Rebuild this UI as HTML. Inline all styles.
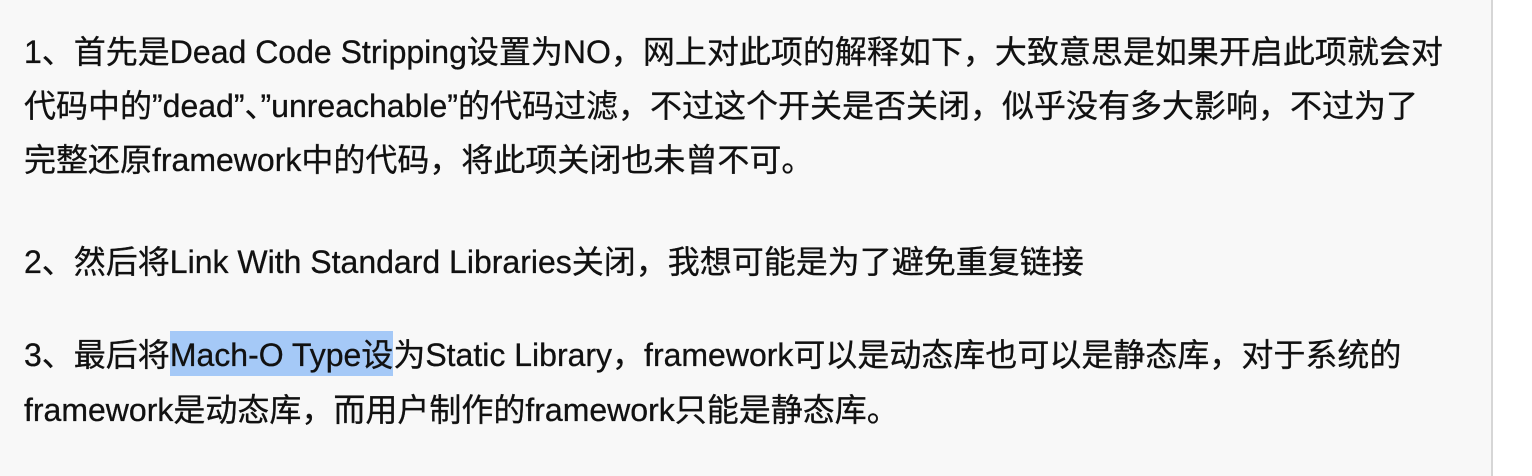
<!DOCTYPE html>
<html><head><meta charset="utf-8"><style>
html,body{margin:0;padding:0;width:1532px;height:476px;overflow:hidden;background:#fff;}
.bg{position:absolute;left:0;top:0;width:1491px;height:476px;background:#f8f8f8;border-right:2px solid #d6d6d6;}
.l{position:absolute;left:24px;white-space:nowrap;font-family:"Liberation Sans","Noto Sans CJK SC",sans-serif;font-size:32px;color:#111;line-height:46px;height:46px;-webkit-text-stroke:0.3px #111;}
.hl{background:#a5c9f7;padding:6px 0 3px 0;}
</style></head><body>
<div class="bg"></div>
<div class="l" style="top:29px">1、首先是Dead Code Stripping设置为NO，网上对此项的解释如下，大致意思是如果开启此项就会对</div>
<div class="l" style="top:83px">代码中的”dead”、”unreachable”的代码过滤，不过这个开关是否关闭，似乎没有多大影响，不过为了</div>
<div class="l" style="top:137px">完整还原framework中的代码，将此项关闭也未曾不可。</div>
<div class="l" style="top:239px">2、然后将Link With Standard Libraries关闭，我想可能是为了避免重复链接</div>
<div class="l" style="top:332px">3、最后将<span class="hl">Mach-O Type设</span>为Static Library，framework可以是动态库也可以是静态库，对于系统的</div>
<div class="l" style="top:387px">framework是动态库，而用户制作的framework只能是静态库。</div>
</body></html>
